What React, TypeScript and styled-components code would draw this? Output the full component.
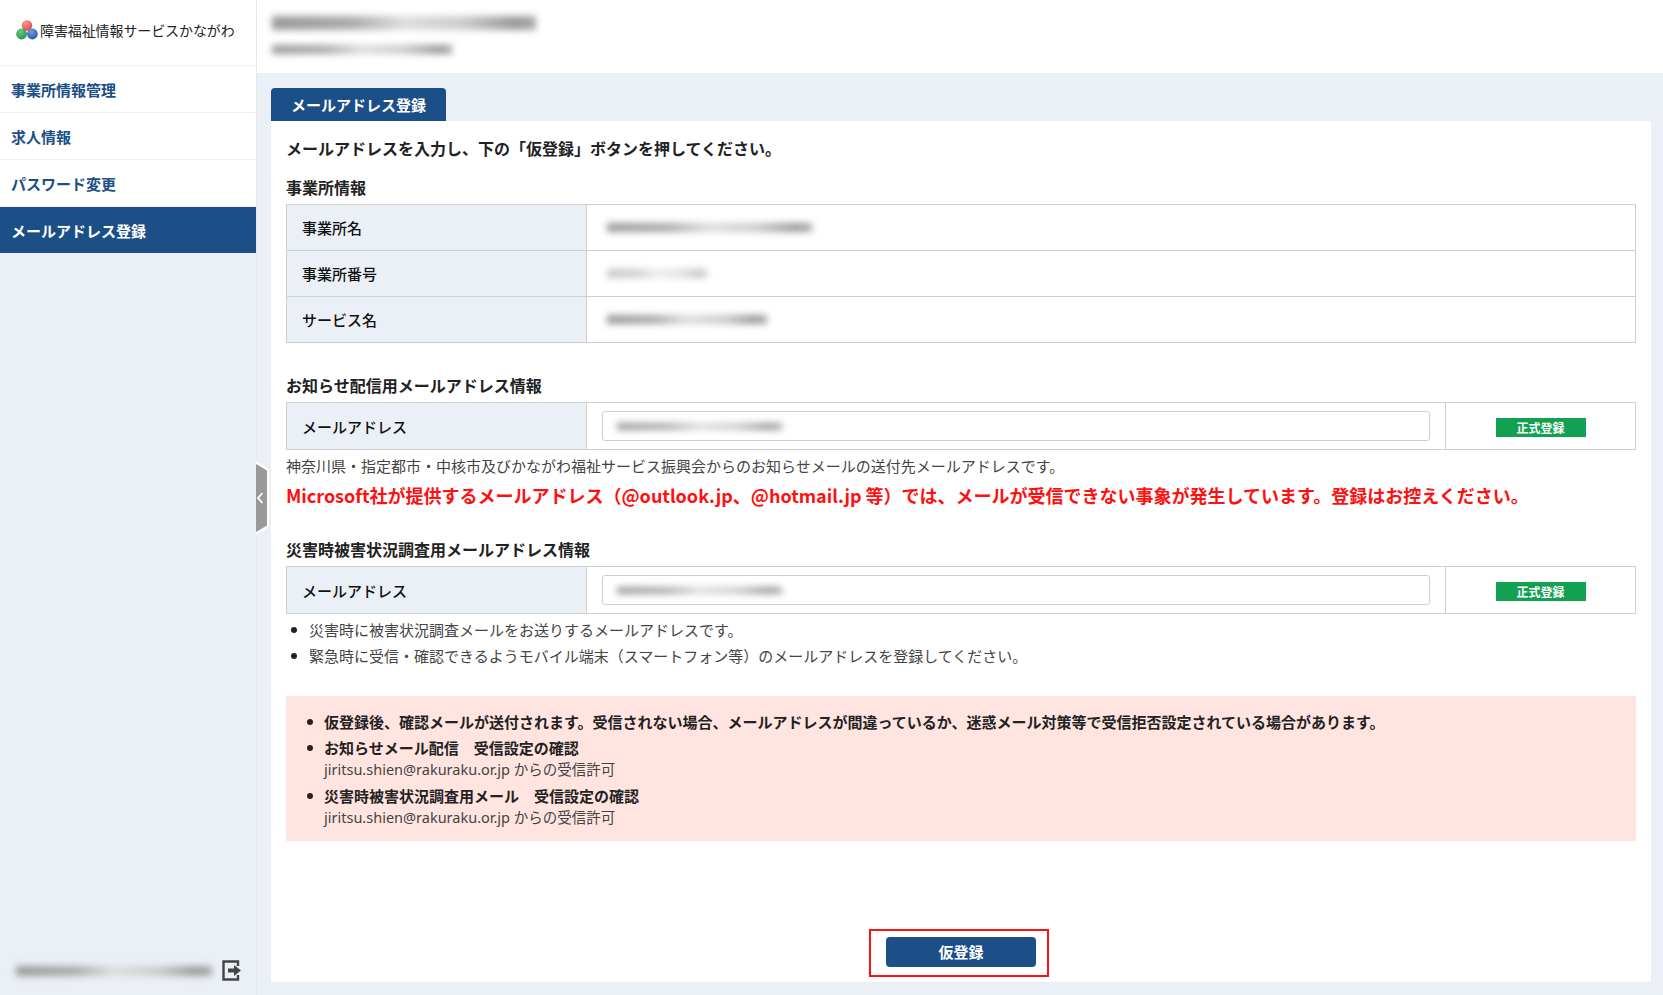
import styled, { createGlobalStyle } from 'styled-components';

const GlobalStyle = createGlobalStyle`
  * {
    box-sizing: border-box;
  }

  html,
  body {
    margin: 0;
    padding: 0;
  }

  body {
    background: #ebf0f7;
    color: #222;
    font-family: 'Noto Sans CJK JP', 'Noto Sans', sans-serif;
    font-size: 15px;
  }
`;

const NAVY = '#1c4e87';
const LINE = '#cfcfcf';

const MENU = ['事業所情報管理', '求人情報', 'パスワード変更', 'メールアドレス登録'];

const Logo = () => (
  <svg width="22" height="20" viewBox="0 0 22 20">
    <defs>
      <radialGradient id="logoRed" cx="0.4" cy="0.3" r="0.8">
        <stop offset="0" stopColor="#ff9a9a" />
        <stop offset="1" stopColor="#e23b3b" />
      </radialGradient>
      <radialGradient id="logoGreen" cx="0.4" cy="0.3" r="0.8">
        <stop offset="0" stopColor="#6cc585" />
        <stop offset="1" stopColor="#1f9148" />
      </radialGradient>
      <radialGradient id="logoBlue" cx="0.4" cy="0.3" r="0.8">
        <stop offset="0" stopColor="#6d9fe0" />
        <stop offset="1" stopColor="#1c56a8" />
      </radialGradient>
    </defs>
    <circle cx="11" cy="5.500" r="5.200" fill="url(#logoRed)" />
    <circle cx="5.600" cy="14" r="5.400" fill="url(#logoGreen)" />
    <circle cx="16.400" cy="14" r="5.400" fill="url(#logoBlue)" />
  </svg>
);

const LogoutIcon = () => (
  <svg width="20" height="21" viewBox="0 0 20 21">
    <path d="M16 6V1.500H1.500v18H16V15" fill="none" stroke="#444" strokeWidth="2.400" />
    <path d="M6 8.500h6V5l7 5.500-7 5.500v-3.500H6z" fill="#444" />
  </svg>
);

const App = () => (
  <>
    <GlobalStyle />
    <Page>
      <Sidebar>
        <Brand>
          <Logo />
          <BrandName>障害福祉情報サービスかながわ</BrandName>
        </Brand>
        <Menu>
          {MENU.map((label, i) => (
            <MenuItem key={label} $active={i === MENU.length - 1}>
              {label}
            </MenuItem>
          ))}
        </Menu>
        <UserRow>
          <Blurred $width={196} $height={10} />
          <LogoutIcon />
        </UserRow>
      </Sidebar>
      <Handle>
        <svg width="13" height="74" viewBox="0 0 13 74">
          <path d="M0 0l13 8v58L0 74z" fill="#fff" />
          <path d="M0 3l11 6.500v55L0 71z" fill="#999" />
          <path d="M6.500 32l-4.500 5 4.500 5" fill="none" stroke="#fff" strokeWidth="1.800" />
        </svg>
      </Handle>
      <Content>
        <Header>
          <Blurred $width={264} $height={14} />
          <Blurred $width={180} $height={9} />
        </Header>
        <Main>
          <Tab>メールアドレス登録</Tab>
          <Panel>
            <Lead>メールアドレスを入力し、下の「仮登録」ボタンを押してください。</Lead>
            <SectionTitle>事業所情報</SectionTitle>
            <InfoTable>
              <InfoRow>
                <HeadCell>事業所名</HeadCell>
                <ValueCell>
                  <Blurred $width={205} $height={9} />
                </ValueCell>
              </InfoRow>
              <InfoRow>
                <HeadCell>事業所番号</HeadCell>
                <ValueCell>
                  <Blurred $width={100} $height={9} $faint />
                </ValueCell>
              </InfoRow>
              <InfoRow>
                <HeadCell>サービス名</HeadCell>
                <ValueCell>
                  <Blurred $width={160} $height={9} />
                </ValueCell>
              </InfoRow>
            </InfoTable>

            <MailTitle>お知らせ配信用メールアドレス情報</MailTitle>
            <MailTable>
              <MailHead>メールアドレス</MailHead>
              <InputCell>
                <FakeInput>
                  <Blurred $width={165} $height={7} />
                </FakeInput>
              </InputCell>
              <StatusCell>
                <Badge>正式登録</Badge>
              </StatusCell>
            </MailTable>
            <Note>神奈川県・指定都市・中核市及びかながわ福祉サービス振興会からのお知らせメールの送付先メールアドレスです。</Note>
            <Warning>
              Microsoft社が提供するメールアドレス（@outlook.jp、@hotmail.jp 等）では、メールが受信できない事象が発生しています。登録はお控えください。
            </Warning>

            <MailTitle $top={28}>災害時被害状況調査用メールアドレス情報</MailTitle>
            <MailTable>
              <MailHead>メールアドレス</MailHead>
              <InputCell>
                <FakeInput>
                  <Blurred $width={165} $height={7} />
                </FakeInput>
              </InputCell>
              <StatusCell>
                <Badge>正式登録</Badge>
              </StatusCell>
            </MailTable>
            <NoteList>
              <li>災害時に被害状況調査メールをお送りするメールアドレスです。</li>
              <li>緊急時に受信・確認できるようモバイル端末（スマートフォン等）のメールアドレスを登録してください。</li>
            </NoteList>

            <Notice>
              <NoticeList>
                <li>
                  <strong>仮登録後、確認メールが送付されます。受信されない場合、メールアドレスが間違っているか、迷惑メール対策等で受信拒否設定されている場合があります。</strong>
                </li>
                <li>
                  <strong>お知らせメール配信　受信設定の確認</strong>
                  <br />
                  <MailLine>jiritsu.shien@rakuraku.or.jp からの受信許可</MailLine>
                </li>
                <li>
                  <strong>災害時被害状況調査用メール　受信設定の確認</strong>
                  <br />
                  <MailLine>jiritsu.shien@rakuraku.or.jp からの受信許可</MailLine>
                </li>
              </NoticeList>
            </Notice>

            <Actions>
              <ActionFrame>
                <SubmitButton type="button">仮登録</SubmitButton>
              </ActionFrame>
            </Actions>
          </Panel>
        </Main>
      </Content>
    </Page>
  </>
);

const Page = styled.div`
  display: flex;
  position: relative;
  width: 1663px;
  height: 995px;
  overflow: hidden;
`;

const Sidebar = styled.aside`
  display: flex;
  flex-direction: column;
  flex: 0 0 257px;
  border-right: 1px solid #e2e7f0;
`;

const Brand = styled.div`
  display: flex;
  align-items: center;
  gap: 2px;
  height: 66px;
  padding: 0 0 6px 16px;
  border-bottom: 1px solid #eef1f6;
  background: #fff;
`;

const BrandName = styled.span`
  color: #222;
  font-size: 14px;
  letter-spacing: -0.1px;
  white-space: nowrap;
`;

const Menu = styled.nav`
  display: flex;
  flex-direction: column;
`;

const MenuItem = styled.a<{ $active?: boolean }>`
  display: flex;
  align-items: center;
  height: 47px;
  padding-left: 11px;
  border-bottom: 1px solid #eef1f6;
  background: ${({ $active }) => ($active ? NAVY : '#fff')};
  color: ${({ $active }) => ($active ? '#fff' : NAVY)};
  font-size: 15px;
  font-weight: 700;
`;

const UserRow = styled.div`
  display: flex;
  align-items: center;
  justify-content: space-between;
  margin-top: auto;
  padding: 0 14px 14px 16px;
`;

const Blurred = styled.div<{ $width: number; $height: number; $faint?: boolean }>`
  width: ${({ $width }) => $width}px;
  height: ${({ $height }) => $height}px;
  background: linear-gradient(90deg, #999 0%, #aaa 30%, #ddd 50%, #ccc 72%, #999 92%, #aaa 100%);
  filter: blur(3.5px);
  opacity: ${({ $faint }) => ($faint ? 0.55 : 1)};
`;

const Handle = styled.div`
  position: absolute;
  top: 461px;
  left: 256px;
  display: flex;
`;

const Content = styled.div`
  display: flex;
  flex-direction: column;
  flex: 1;
  min-width: 0;
`;

const Header = styled.header`
  display: flex;
  flex-direction: column;
  gap: 15px;
  height: 73px;
  padding: 16px 15px;
  background: #fff;
`;

const Main = styled.main`
  display: flex;
  flex-direction: column;
  align-items: flex-start;
  height: 909px;
  padding: 15px 12px 0 14px;
`;

const Tab = styled.div`
  display: flex;
  align-items: center;
  height: 33px;
  padding: 0 20px;
  border-radius: 4px 4px 0 0;
  background: ${NAVY};
  color: #fff;
  font-size: 15px;
  font-weight: 700;
`;

const Panel = styled.section`
  display: flex;
  flex-direction: column;
  flex: 1;
  width: 100%;
  padding: 15px 15px 5px;
  background: #fff;
`;

const Lead = styled.p`
  margin: 0 0 15px;
  font-size: 16px;
  font-weight: 700;
  line-height: 24px;
`;

const SectionTitle = styled.h3`
  margin: 0 0 5px;
  font-size: 16px;
  font-weight: 700;
  line-height: 24px;
`;

const MailTitle = styled(SectionTitle)<{ $top?: number }>`
  margin-top: ${({ $top }) => $top ?? 30}px;
`;

const InfoTable = styled.div`
  display: flex;
  flex-direction: column;
  border: 1px solid ${LINE};
`;

const InfoRow = styled.div`
  display: flex;
  height: 45px;

  & + & {
    height: 46px;
    border-top: 1px solid ${LINE};
  }
`;

const HeadCell = styled.div`
  display: flex;
  flex: 0 0 300px;
  align-items: center;
  padding: 0 0 1px 15px;
  border-right: 1px solid ${LINE};
  background: #ebf0f7;
  color: #111;
  font-size: 15px;
  font-weight: 500;
`;

const MailHead = styled(HeadCell)`
  padding-bottom: 0;
`;

const ValueCell = styled.div`
  display: flex;
  flex: 1;
  align-items: center;
  padding-left: 20px;
`;

const MailTable = styled.div`
  display: flex;
  height: 48px;
  border: 1px solid ${LINE};
`;

const InputCell = styled.div`
  display: flex;
  flex: 1;
  align-items: center;
  padding: 0 15px;
  border-right: 1px solid ${LINE};
`;

const FakeInput = styled.div`
  display: flex;
  align-items: center;
  width: 100%;
  height: 30px;
  padding-left: 14px;
  border: 1px solid ${LINE};
  border-radius: 3px;
`;

const StatusCell = styled.div`
  display: flex;
  flex: 0 0 189px;
  align-items: center;
  justify-content: center;
  padding-top: 2px;
`;

const Badge = styled.span`
  display: flex;
  align-items: center;
  justify-content: center;
  width: 90px;
  height: 19px;
  background: #12a150;
  color: #fff;
  font-size: 12px;
  font-weight: 700;
`;

const Note = styled.p`
  margin: 4px 0 0;
  color: #444;
  font-size: 15px;
  line-height: 24px;
`;

const Warning = styled.p`
  margin: 3px 0 0;
  color: #ff1010;
  font-size: 18px;
  font-weight: 700;
  line-height: 28px;
  white-space: nowrap;
`;

const NoteList = styled.ul`
  margin: 3px 0 0;
  padding: 0 0 0 23px;
  color: #444;
  font-size: 15px;
  line-height: 26px;
  list-style: none;

  li {
    position: relative;
  }

  li::before {
    content: '';
    position: absolute;
    top: 10px;
    left: -18px;
    width: 6px;
    height: 6px;
    border-radius: 50%;
    background: #222;
  }
`;

const Notice = styled.div`
  height: 145px;
  margin-top: 27px;
  padding: 15px 0 0 38px;
  background: #ffe4df;
`;

const NoticeList = styled.ul`
  margin: 0;
  padding: 0;
  color: #333;
  font-size: 15px;
  line-height: 21px;
  list-style: none;

  li {
    position: relative;
  }

  li + li {
    margin-top: 5px;
  }

  li::before {
    content: '';
    position: absolute;
    top: 8px;
    left: -17px;
    width: 6px;
    height: 6px;
    border-radius: 50%;
    background: #222;
  }

  strong {
    color: #222;
    font-weight: 700;
  }
`;

const MailLine = styled.span`
  color: #444;
  font-family: 'Noto Sans', 'Noto Sans CJK JP', sans-serif;
  font-size: 14.5px;
`;

const Actions = styled.div`
  display: flex;
  justify-content: center;
  margin-top: auto;
`;

const ActionFrame = styled.div`
  display: flex;
  align-items: flex-start;
  justify-content: center;
  width: 180px;
  height: 48px;
  margin-right: 4px;
  padding: 6px 0 0 4px;
  border: 2px solid #ff1010;
`;

const SubmitButton = styled.button`
  width: 150px;
  height: 30px;
  padding: 0 0 2px;
  border: 0;
  border-radius: 4px;
  background: ${NAVY};
  color: #fff;
  font-family: inherit;
  font-size: 15px;
  font-weight: 700;
`;

export default App;
